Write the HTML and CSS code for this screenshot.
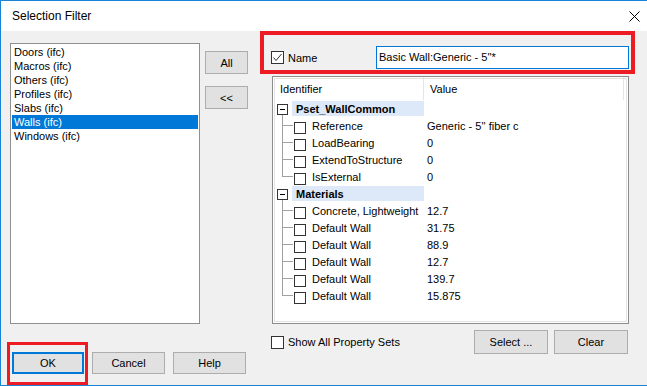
FILE: index.html
```html
<!DOCTYPE html>
<html lang="en">
<head>
  <meta charset="UTF-8" />
  <title>Selection Filter</title>
  <link rel="stylesheet" href="styles.css">
</head>
<body>

  <div class="window">
    <!-- Title bar -->
    <div class="titlebar">
      <span class="title">Selection Filter</span>
      <svg class="close" width="11" height="11" viewBox="0 0 11 11">
        <path d="M0.5 0.5 L10.5 10.5 M10.5 0.5 L0.5 10.5" stroke="#000" stroke-width="1" fill="none"/>
      </svg>
    </div>

    <div class="content">
      <!-- Left: categories -->
      <div class="left-col">
        <ul class="listbox">
          <li>Doors (ifc)</li>
          <li>Macros (ifc)</li>
          <li>Others (ifc)</li>
          <li>Profiles (ifc)</li>
          <li>Slabs (ifc)</li>
          <li class="selected">Walls (ifc)</li>
          <li>Windows (ifc)</li>
        </ul>
        <div class="dialog-buttons">
          <span class="marked ok-mark"><button class="btn btn-default">OK</button></span>
          <button class="btn">Cancel</button>
          <button class="btn">Help</button>
        </div>
      </div>

      <!-- Middle buttons -->
      <div class="mid-col">
        <button class="btn btn-small">All</button>
        <button class="btn btn-small">&lt;&lt;</button>
      </div>

      <!-- Right: properties -->
      <div class="right-col">
        <div class="name-row marked name-mark">
          <label class="check">
            <span class="box">
              <svg width="11" height="11" viewBox="0 0 11 11">
                <path d="M1.5 5.5 L4 8.5 L9.5 2" stroke="#333" stroke-width="1" fill="none"/>
              </svg>
            </span>
            Name
          </label>
          <div class="name-input">Basic Wall:Generic - 5''*</div>
        </div>

        <div class="grid">
          <div class="grid-head">
            <div class="head-id">Identifier</div>
            <div class="head-val">Value</div>
          </div>

          <div class="group-row">
            <div class="id"><span class="tog"></span><span class="group-label">Pset_WallCommon</span></div>
          </div>
          <div class="row"><div class="id"><span class="cb"></span>Reference</div><div class="val">Generic - 5'' fiber c</div></div>
          <div class="row"><div class="id"><span class="cb"></span>LoadBearing</div><div class="val">0</div></div>
          <div class="row"><div class="id"><span class="cb"></span>ExtendToStructure</div><div class="val">0</div></div>
          <div class="row last"><div class="id"><span class="cb"></span>IsExternal</div><div class="val">0</div></div>

          <div class="group-row">
            <div class="id"><span class="tog"></span><span class="group-label">Materials</span></div>
          </div>
          <div class="row"><div class="id"><span class="cb"></span>Concrete, Lightweight</div><div class="val">12.7</div></div>
          <div class="row"><div class="id"><span class="cb"></span>Default Wall</div><div class="val">31.75</div></div>
          <div class="row"><div class="id"><span class="cb"></span>Default Wall</div><div class="val">88.9</div></div>
          <div class="row"><div class="id"><span class="cb"></span>Default Wall</div><div class="val">12.7</div></div>
          <div class="row"><div class="id"><span class="cb"></span>Default Wall</div><div class="val">139.7</div></div>
          <div class="row last"><div class="id"><span class="cb"></span>Default Wall</div><div class="val">15.875</div></div>
        </div>

        <div class="bottom-row">
          <label class="check"><span class="box"></span>Show All Property Sets</label>
          <button class="btn btn-wide">Select ...</button>
          <button class="btn btn-wide">Clear</button>
        </div>
      </div>
    </div>
  </div>

</body>
</html>
```

FILE: styles.css
```css
html, body {
  margin: 0;
  overflow: hidden;
}

body {
  font-family: 'Liberation Sans', Arial, sans-serif;
  font-size: 11px;
  color: #000;
  background: #fff;
}

.window {
  width: 647px;
  height: 386px;
  box-sizing: border-box;
  border: 1px solid #1883d7;
  border-right: none;
  display: flex;
  flex-direction: column;
}

/* Title bar */
.titlebar {
  height: 30px;
  background: #fff;
  display: flex;
  align-items: center;
  justify-content: space-between;
  padding: 0 7px 0 11px;
}

.title {
  font-size: 12px;
}

.close {
  display: block;
}

.content {
  flex: 1;
  background: #f0f0f0;
  display: flex;
  padding: 12px 0 0 9px;
}

/* Buttons */
.btn {
  font-family: inherit;
  font-size: 11px;
  color: #000;
  background: #e1e1e1;
  border: 1px solid #adadad;
  height: 22px;
  padding: 0;
  box-sizing: border-box;
  flex-shrink: 0;
}

.btn-default {
  border: 2px solid #0078d7;
}

.btn-small {
  width: 43px;
  height: 23px;
}

.btn-wide {
  width: 74px;
  height: 24px;
}

/* Red annotation boxes */
.marked {
  position: relative;
}

.marked::after {
  content: '';
  position: absolute;
  border: 3px solid #ed1c24;
  pointer-events: none;
}

.ok-mark {
  display: block;
  flex-shrink: 0;
}

.ok-mark .btn {
  width: 72px;
  display: block;
}

.ok-mark::after {
  top: -10px;
  left: -5px;
  right: -4px;
  bottom: -11px;
}

.name-mark::after {
  top: -15px;
  left: -10px;
  right: -6px;
  bottom: -5px;
  border-width: 4px;
}

/* Left column */
.left-col {
  width: 190px;
  flex-shrink: 0;
}

.listbox {
  list-style: none;
  margin: 0;
  padding: 1px;
  height: 281px;
  box-sizing: border-box;
  border: 1px solid #8f8f8f;
  background: #fff;
}

.listbox li {
  height: 14px;
  line-height: 14px;
  padding-left: 2px;
}

.listbox li.selected {
  background: #0078d7;
  color: #fff;
}

.dialog-buttons {
  display: flex;
  width: max-content;
  gap: 8px;
  margin: 28px 0 0 2px;
}

.dialog-buttons > .btn {
  width: 73px;
}

/* Middle column */
.mid-col {
  width: 43px;
  flex-shrink: 0;
  margin-left: 5px;
  padding-top: 8px;
  display: flex;
  flex-direction: column;
  gap: 12px;
}

/* Right column */
.right-col {
  width: 359px;
  flex-shrink: 0;
  margin-left: 22px;
}

.name-row {
  margin-top: 3px;
  height: 23px;
  display: flex;
  align-items: center;
}

.check {
  display: flex;
  align-items: center;
  gap: 4px;
  margin-left: 1px;
}

.box {
  width: 13px;
  height: 13px;
  box-sizing: border-box;
  border: 1px solid #333;
  background: #fff;
  display: flex;
  align-items: center;
  justify-content: center;
}

.name-input {
  margin-left: auto;
  width: 253px;
  height: 23px;
  box-sizing: border-box;
  border: 1px solid #0078d7;
  background: #fff;
  padding-left: 2px;
  line-height: 20px;
}

/* Property grid */
.grid {
  margin: 7px 0 0 2px;
  width: 357px;
  height: 248px;
  box-sizing: border-box;
  border: 1px solid #8c8c8c;
  box-shadow: inset 0 0 0 1px #fff, inset 0 0 0 2px #e3e3e3;
  background: #fff;
}

.grid-head {
  height: 23px;
  display: flex;
  align-items: center;
}

.head-id {
  width: 151px;
  height: 100%;
  box-sizing: border-box;
  padding-left: 7px;
  border-right: 1px solid #e5e5e5;
  display: flex;
  align-items: center;
}

.head-val {
  width: 200px;
  height: 100%;
  box-sizing: border-box;
  padding-left: 6px;
  border-right: 1px solid #e5e5e5;
  display: flex;
  align-items: center;
}

.group-row,
.row {
  height: 17px;
  display: flex;
}

.id {
  width: 151px;
  flex-shrink: 0;
  position: relative;
  display: flex;
  align-items: center;
  white-space: nowrap;
}

.val {
  padding-left: 3px;
  display: flex;
  align-items: center;
  white-space: nowrap;
}

.group-row .id {
  align-items: stretch;
}

.group-row .id::after {
  content: '';
  position: absolute;
  left: 9px;
  top: 15px;
  bottom: 0;
  border-left: 1px solid #a0a0a0;
}

.tog {
  width: 11px;
  height: 11px;
  box-sizing: border-box;
  margin: 4px 0 0 4px;
  border: 1px solid #333;
  position: relative;
}

.tog::before {
  content: '';
  position: absolute;
  left: 2px;
  right: 2px;
  top: 4px;
  border-top: 1px solid #000;
}

.group-label {
  flex: 1;
  margin: 1px 0 1px 4px;
  padding-left: 4px;
  background: #dde8f8;
  font-weight: bold;
  display: flex;
  align-items: center;
}

/* Tree lines for child rows */
.row .id::before {
  content: '';
  position: absolute;
  left: 9px;
  top: 0;
  width: 10px;
  height: 8px;
  border-left: 1px solid #a0a0a0;
  border-bottom: 1px solid #a0a0a0;
}

.row .id::after {
  content: '';
  position: absolute;
  left: 9px;
  top: 8px;
  bottom: 0;
  border-left: 1px solid #a0a0a0;
}

.row.last .id::after {
  display: none;
}

.cb {
  width: 12px;
  height: 12px;
  box-sizing: border-box;
  border: 1px solid #333;
  margin: 5px 6px 0 21px;
  align-self: flex-start;
}

/* Bottom row */
.bottom-row {
  margin-top: 6px;
  height: 24px;
  display: flex;
  align-items: center;
  gap: 6px;
}

.bottom-row .check {
  margin-right: auto;
}

.bottom-row .btn:last-child {
  margin-right: 1px;
}
```
